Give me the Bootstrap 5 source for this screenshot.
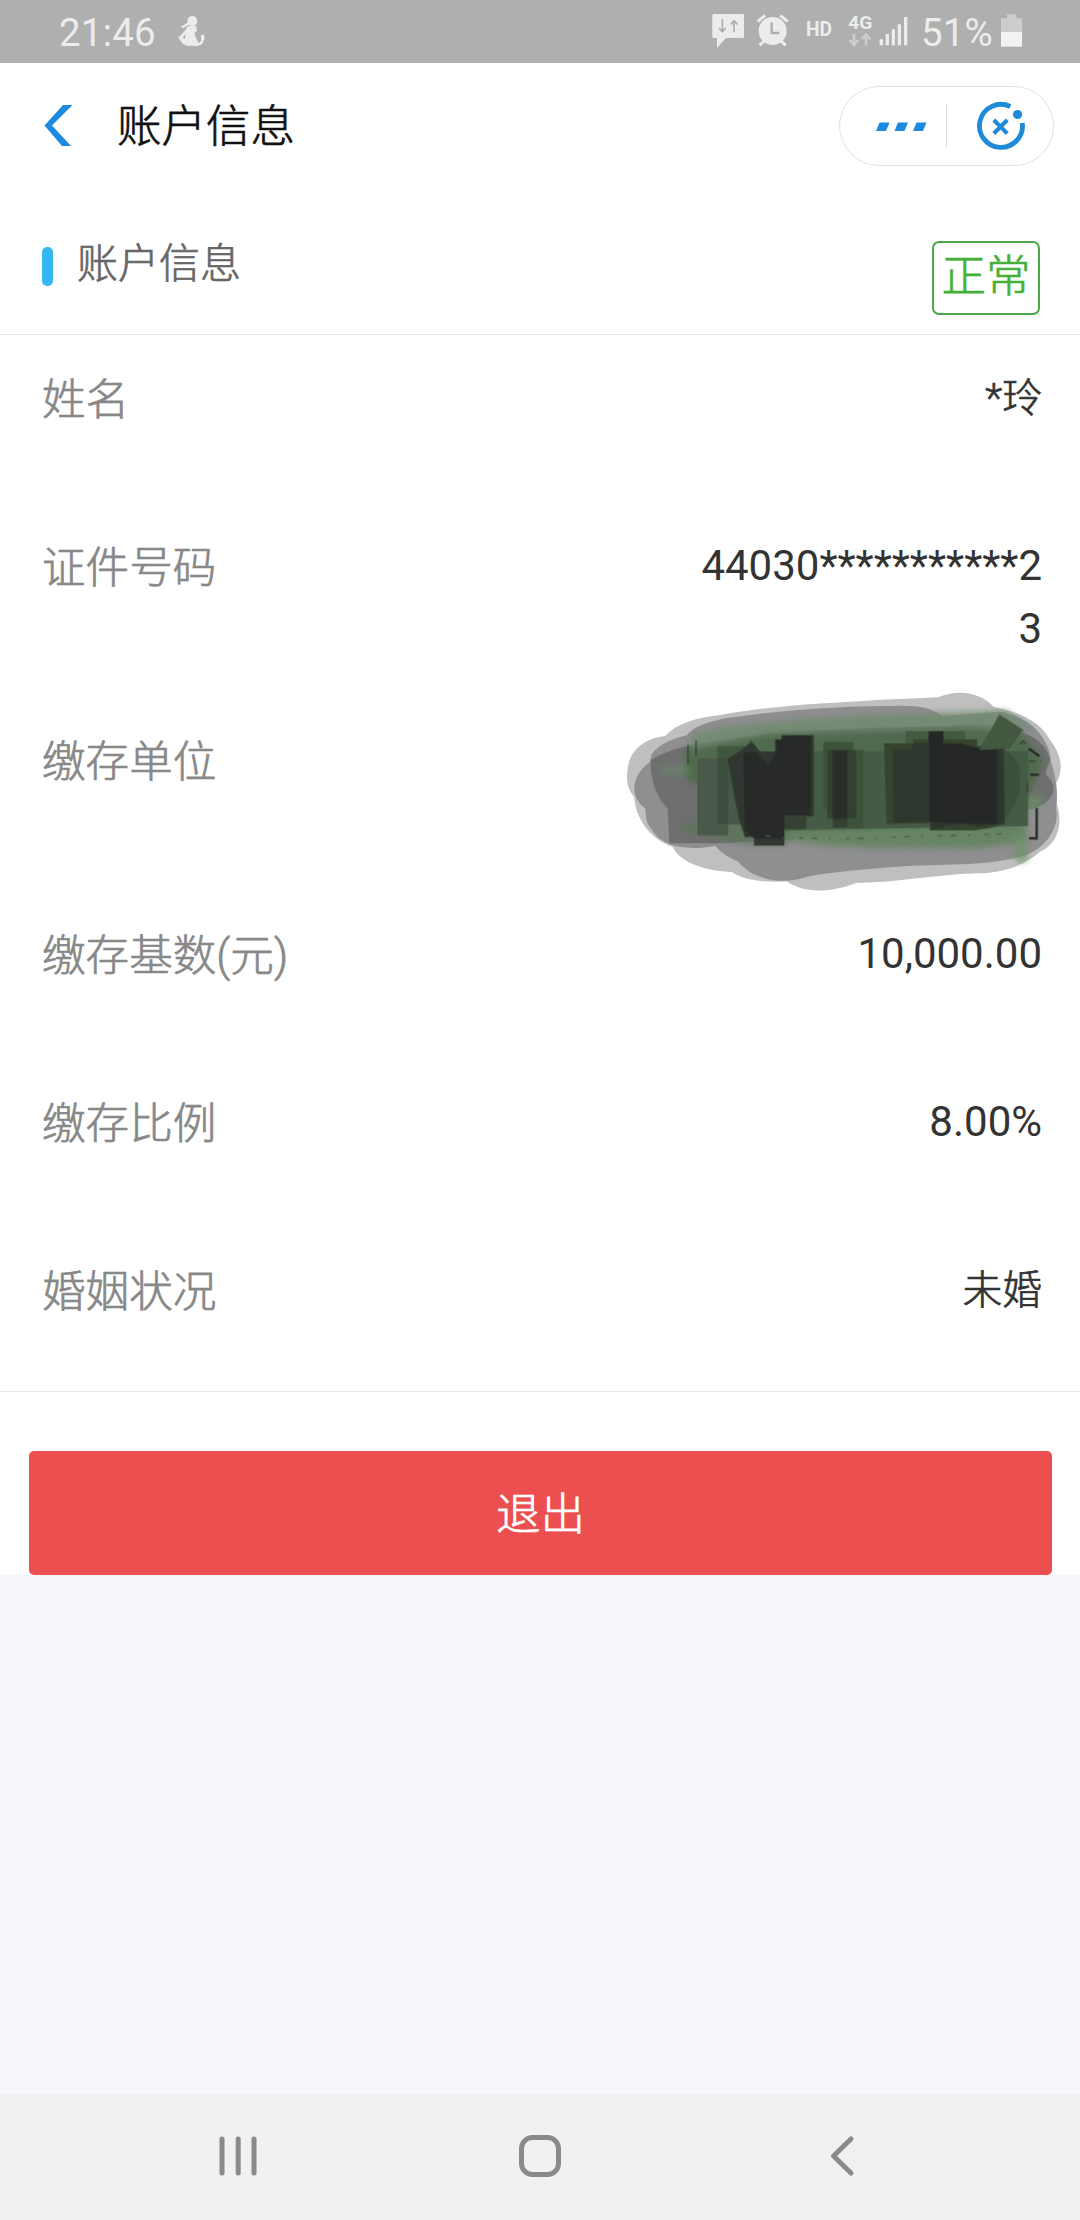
<!DOCTYPE html>
<html lang="zh-CN">
<head>
<meta charset="utf-8">
<meta name="viewport" content="width=device-width, initial-scale=1">
<title>账户信息</title>
<link href="https://cdn.jsdelivr.net/npm/bootstrap@5.3.0/dist/css/bootstrap.min.css" rel="stylesheet">
<style>
body{font-family:Roboto,"Noto Sans CJK SC",sans-serif;background:#f5f5fa;color:#333;width:1080px;height:2220px;overflow:hidden}
svg{display:block;flex:none}
.status-bar{height:63px;background:#afafaf;color:#ececec;padding:0 58px 0 59px}
.clock{font-size:38.5px;line-height:63px;letter-spacing:.2px;padding-top:1px}
.runner{margin-left:19px}
.percent{margin-left:-9px}
.battery{margin-left:8px}
.title-bar{height:126px;padding:0 26px 0 44px}
.page-title,.section-title,.state-tag,.info-label,.quit,.hanzi{font-weight:300;-webkit-text-stroke:.7px currentColor}
.page-title{font-size:44.5px;line-height:60px;color:#111;margin-left:44px;padding-top:2px}
.capsule{width:215px;height:80px;border:1px solid #e2e2e2}
.section-head{height:146px;border-bottom:1px solid #e8e8ea;padding:0 40px 0 42px}
.accent{width:11px;height:39px;border-radius:5px;background:#38b8f2;margin-top:58px}
.section-title{font-size:41px;line-height:60px;color:#666;margin:45px 0 0 24px}
.state-tag{width:108px;height:74px;border:2.5px solid #48a845;border-radius:7px;color:#45b035;font-size:44.5px;line-height:68px;margin-top:52px}
.info{height:1057px;border-bottom:1px solid #e8e8ea}
.info-row{min-height:168px;padding:31px 38px 37px 42px;line-height:63px}
.info-label{font-size:43.6px;color:#888;padding-top:3px}
.info-value{font-size:42px;width:360px;word-break:break-all}
.info-value.hanzi{font-size:39.8px;padding-top:1px}
.double{min-height:194px}
.scribble{right:0;top:-17px}
.quit-wrap{padding:59px 28px 0 29px}
.quit{height:124px;border-radius:5px;background:#eb4f50;color:#fff;font-size:44.5px;line-height:124px;padding:2px 0 0;border:0}
.footer-nav{height:126px;background:#f1f1f1}
</style>
</head>
<body class="d-flex flex-column">
<header class="status-bar d-flex justify-content-between">
  <div class="d-flex">
    <span class="clock">21:46</span>
    <svg class="runner" width="40" height="63" viewBox="0 0 120 189"><g transform="translate(-528 0)" fill="#ececec"><circle cx="580" cy="63" r="15"/><path d="M568 78h24l2 14-8 8 8 20 6 10 6-8 0-16 9-3 2 12-8 18-16 6-12-2h-16l-14-6-13-18 22-24 4-7z"/><path d="M546 80l22-13 5 6-22 12z"/><path d="M551 112l9-9-3 15z" fill="#afafaf"/></g></svg>
  </div>
  <div class="d-flex">
    <svg width="226" height="63" viewBox="0 0 678 189"><g transform="translate(-40 0)">
      <g fill="#ececec"><path d="M69 42h87q4 0 4 4v64q0 4-4 4h-50l-27 30v-30h-10q-4 0-4-4V46q0-4 4-4z"/></g>
      <path d="M95 58v36m-10-10l10 11 10-11M130 97V63m-10 10l10-11 10 11" fill="none" stroke="#afafaf" stroke-width="5"/>
      <circle cx="246" cy="93" r="42" fill="#ececec"/><path d="M201 65l22-19M291 65l-22-19M207 136l15-15M285 136l-15-15" stroke="#ececec" stroke-width="9"/><path d="M243 67v32h23" fill="none" stroke="#afafaf" stroke-width="7"/>
      <text x="346" y="108" font-size="58" font-weight="700" textLength="78" lengthAdjust="spacingAndGlyphs" fill="#ececec">HD</text>
      <text x="473" y="86" font-size="54" font-weight="700" textLength="72" lengthAdjust="spacingAndGlyphs" fill="#ececec">4G</text>
      <path d="M490 102v32m-13-14l13 15 13-15M526 136v-32m-13 14l13-15 13 15" fill="none" stroke="#cdcdcd" stroke-width="8"/>
      <path d="M567 118h10v18h-10zM585 102h10v34h-10zM603 88h10v48h-10zM621 73h10v63h-10zM640 51h10v85h-10z" fill="#ececec"/>
    </g></svg>
    <span class="clock percent">51%</span>
    <svg class="battery" width="21" height="63" viewBox="0 0 63 189"><path d="M18 43h28v12h17v41H0V55h18z" fill="#cdcdcd"/><path d="M0 96h63v44H0z" fill="#f2f2f2"/></svg>
  </div>
</header>
<main class="bg-white">
  <div class="title-bar d-flex align-items-center">
    <svg width="29" height="42" viewBox="0 0 29 42"><path d="M19 0h9.500L8 20.500 27 41h-9L.5 20.500z" fill="#1c8ae0"/></svg>
    <h1 class="page-title mb-0">账户信息</h1>
    <div class="capsule rounded-pill ms-auto">
      <svg width="213" height="78" viewBox="0 0 213 78"><path d="M39.500 35.500h10l-3.500 8.500H36zM58 35.500h10l-3.500 8.500h-10zM76.500 35.500h10L83 44H73z" fill="#1c8ae0"/><path d="M106.500 17v44" stroke="#ddd"/><path d="M170.300 19.500A21.500 21.500 0 1 0 182.300 36" fill="none" stroke="#1f8ad8" stroke-width="4.800"/><circle cx="177.500" cy="27.500" r="4.600" fill="#1f8ad8"/><path d="M153.800 33l13.500 13.500m0-13.500l-13.500 13.500" stroke="#1f8ad8" stroke-width="4"/></svg>
    </div>
  </div>
  <section>
    <div class="section-head d-flex">
      <span class="accent"></span><h2 class="section-title mb-0">账户信息</h2>
      <span class="state-tag ms-auto text-center">正常</span>
    </div>
    <div class="info">
      <div class="info-row d-flex justify-content-between"><span class="info-label">姓名</span><span class="info-value hanzi text-end">*玲</span></div>
      <div class="info-row double d-flex justify-content-between"><span class="info-label">证件号码</span><span class="info-value text-end">44030***********23</span></div>
      <div class="info-row double d-flex justify-content-between position-relative"><span class="info-label">缴存单位</span>
        <svg class="scribble position-absolute" width="470" height="220" viewBox="0 0 1410 660">
          <defs><filter id="soft" x="-20%" y="-20%" width="140%" height="140%"><feGaussianBlur stdDeviation="9"/></filter></defs>
          <path fill="#bfbfbf" d="M52 275C55 215 100 175 165 168C200 130 260 112 335 104C500 75 650 70 800 60L985 52C1040 28 1110 35 1150 80C1220 95 1290 120 1320 180C1360 230 1360 280 1335 315L1340 370C1360 430 1345 490 1290 515C1240 560 1170 580 1100 580C960 585 850 610 740 608C660 640 580 640 530 604C460 608 400 600 365 576C290 572 210 550 188 500C130 480 80 430 72 350C55 330 48 305 52 275Z"/>
          <path fill="#8f8e90" d="M125 222C150 190 200 172 230 166C260 130 330 115 400 108C560 85 720 78 880 77C940 77 970 88 998 108L1170 95C1250 105 1320 170 1323 245C1340 300 1345 340 1338 385C1350 440 1310 500 1250 525C1140 560 1000 550 860 560C760 568 670 575 600 588C520 618 430 600 385 545C350 530 325 510 316 497C250 510 160 510 125 448C105 430 108 400 106 385C60 355 60 290 120 245Z"/>
          <path fill="#6f6f70" d="M122 240C180 205 240 195 310 185C500 150 750 145 1000 138C1160 125 1300 145 1320 240C1310 270 1300 280 1315 290C1360 340 1300 390 1235 390L1210 435L700 470L320 490L178 490L173 385C145 360 120 310 122 240Z"/>
          <g filter="url(#soft)">
            <path fill="#708a6e" opacity=".85" d="M250 160C400 125 650 110 880 102L1190 92L1270 150L1010 140L480 160L230 205Z"/>
            <path fill="#506b4e" d="M225 210L480 162L1100 145L1230 160L1300 240L1240 390L1240 440L540 475L400 450L370 330L225 300Z"/>
            <path fill="#5a7558" opacity=".8" d="M210 430L340 425L540 450V490L400 490L220 455Z"/>
            <path fill="#668463" d="M540 450L1250 430L1250 485L1100 505L690 500L530 480Z"/>
            <path fill="#6b9467" opacity=".35" d="M150 255h90v30H150z"/>
            <path fill="#6b9467" opacity=".8" d="M1255 350h50l-30 35h-25zM1212 470h38v75h-32z"/>
          </g>
          <path fill="#465b45" d="M400 213H1254V438L540 450H400Z"/>
          <path fill="#4b594a" d="M262 235h92v232h-92z"/>
          <path fill="#414e40" d="M322 235h32v195h-32z"/>
          <path fill="#3c4f3a" opacity=".7" d="M322 198h90v235h-90z"/>
          <path fill="#303730" d="M352 235L390 213L425 185L450 215H495V178H515V165H611V410H588V448H523V497H432V470L405 472L385 410Z"/>
          <path fill="#354234" d="M523 405H588V448H523z"/>
          <path fill="#272a28" d="M400 220L435 215L475 255L500 220V180H515V168H602V405H523V475H432L405 450Z"/>
          <path fill="#3d523b" d="M640 186h90v24h29v233h-92v-26l-27-40z"/>
          <path fill="#334032" d="M652 210h85l2 204h-28v28h-42V415h-17z"/>
          <path fill="#2a2f2a" d="M668 212h44v204h-44z"/>
          <path fill="#435a40" d="M887 154h178v80H887z"/>
          <path fill="#35442f" d="M822 190h88v-12h46v-25h45v25h100v20h84v233l-37 12-55 8H960v-22l-130 3z"/>
          <path fill="#2e372d" d="M850 210h55v-20h50v-35h45v36h56l50 15 72-6 5 230-80 10-50-10-92 20v-25l-110 2z"/>
          <path fill="#262827" d="M958 155h42v36h56l50 15 55-3 0 228h-105l-98-5z"/>
          <path fill="#384e36" opacity=".8" d="M1187 210C1245 240 1245 350 1187 415z"/>
          <path fill="#445741" d="M1168 103L1240 150L1205 205L1108 210Z"/>
          <path fill="none" stroke="#5f785c" stroke-width="3" d="M1238 150L1200 212"/>
          <path fill="none" stroke="#262826" stroke-width="7" d="M1280 384V475H1257M1256 206L1288 228M1260 284H1287"/>
          <path fill="none" stroke="#334331" stroke-width="4" d="M234 195V253M258 182V230M420 183l8 9M1230 193l10-10 8 10M1256 244h20M1253 310v28"/>
          <path fill="none" stroke="#466044" stroke-width="4" stroke-dasharray="18 34 6 45 12 24" d="M465 468L540 474L780 476L920 468L1050 466L1205 460"/>
        </svg>
      </div>
      <div class="info-row d-flex justify-content-between"><span class="info-label">缴存基数(元)</span><span class="info-value text-end">10,000.00</span></div>
      <div class="info-row d-flex justify-content-between"><span class="info-label">缴存比例</span><span class="info-value text-end">8.00%</span></div>
      <div class="info-row d-flex justify-content-between"><span class="info-label">婚姻状况</span><span class="info-value hanzi text-end">未婚</span></div>
    </div>
  </section>
  <div class="quit-wrap"><button class="btn quit w-100 d-block">退出</button></div>
</main>
<nav class="footer-nav mt-auto">
  <svg width="1080" height="126" viewBox="0 0 1080 126" fill="none" stroke="#8a8a8a" stroke-width="5" stroke-linecap="round"><path d="M222 45v34M238.200 45v34M254 45v34"/><rect x="521.500" y="43.500" width="37" height="37" rx="11"/><path d="M851 45L833.500 62L851 79" stroke-linejoin="round"/></svg>
</nav>
<script src="https://cdn.jsdelivr.net/npm/bootstrap@5.3.0/dist/js/bootstrap.bundle.min.js"></script>
</body>
</html>
